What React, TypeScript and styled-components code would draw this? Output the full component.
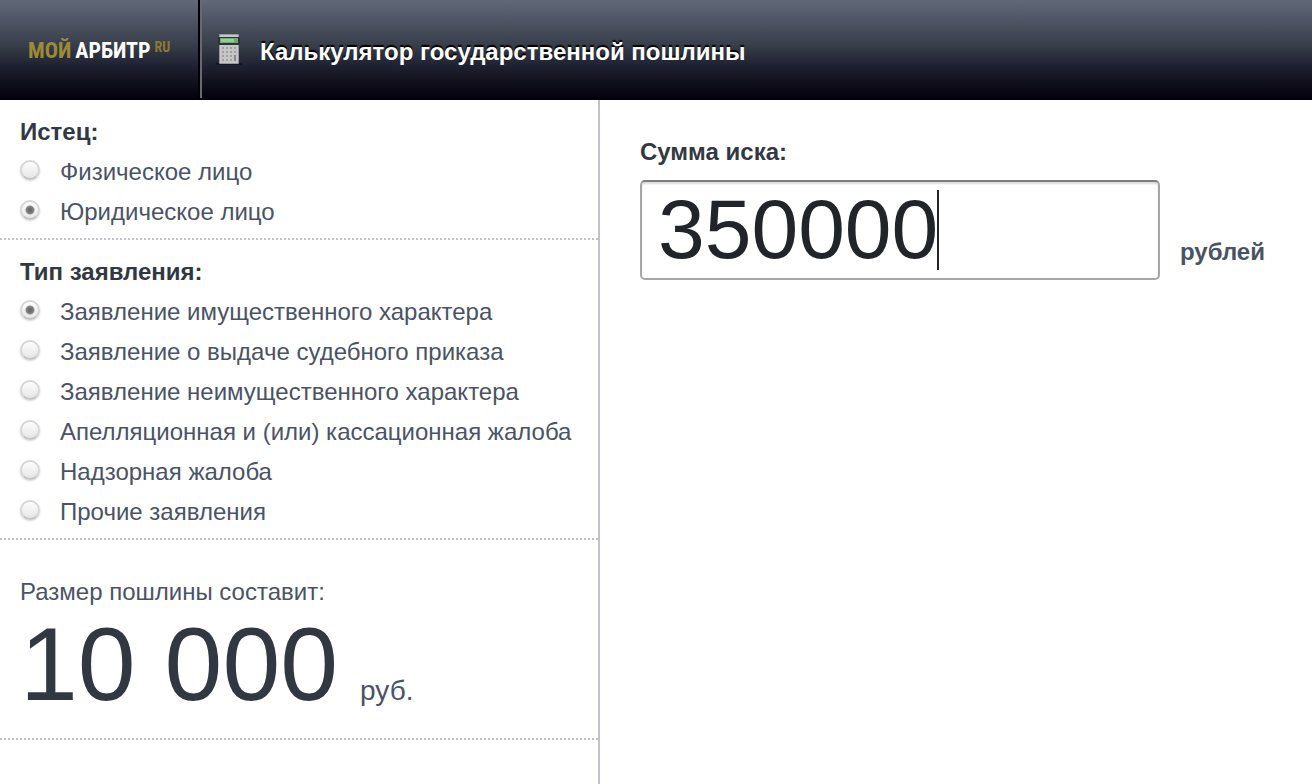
import React, { useState } from "react";
import styled, { createGlobalStyle } from "styled-components";

const GlobalStyle = createGlobalStyle`
  *, *::before, *::after { box-sizing: border-box; }
  body {
    margin: 0;
    background: #fff;
    color: #4a5365;
    font-family: "Liberation Sans", Arial, sans-serif;
    font-size: 24px;
    line-height: 40px;
  }
`;

const Page = styled.div`
  min-height: 100vh;
  display: flex;
  flex-direction: column;
`;

const Header = styled.header`
  display: flex;
  height: 100px;
  background: linear-gradient(#616879 0%, #383e4a 45%, #1f2130 66%, #0a0814 90%, #02000c 100%);
`;

const Logo = styled.a`
  flex: none;
  display: flex;
  align-items: flex-start;
  width: 200px;
  padding: 38px 0 0 28px;
  font-family: "Roboto Condensed", "Open Sans Condensed", Roboto, "Liberation Sans", sans-serif;
  font-size: 22px;
  font-weight: bold;
  line-height: 26px;
  text-decoration: none;
`;

const LogoPart = styled.span<{ $tone: "gold" | "white" }>`
  color: ${(p) => (p.$tone === "gold" ? "#9c8b35" : "#fff")};
  margin-right: 4px;
`;

const LogoZone = styled.sup`
  color: #8b7a33;
  font-size: 14px;
  line-height: 18px;
  vertical-align: top;
`;

const Heading = styled.div`
  flex: 1;
  display: flex;
  align-items: center;
  gap: 16px;
  margin-bottom: 2px;
  padding-left: 14px;
  border-left: 2px solid #686a73;
  box-shadow: -2px 0 #000;
`;

const Title = styled.h1`
  margin: 6px 0 0;
  color: #fff;
  font-size: 24px;
  line-height: 40px;
  text-shadow: 0 -2px 1px #000;
`;

const Body = styled.div`
  flex: 1;
  display: flex;
`;

const Sidebar = styled.aside`
  flex: 0 0 600px;
  border-right: 2px solid #c1c1c9;
`;

const dots = "repeating-linear-gradient(90deg, #c1c1c9 0 2px, transparent 2px 4px)";

const Group = styled.fieldset`
  margin: 0;
  border: 0;
  padding: 12px 20px 8px;
  min-width: 0;
  background: ${dots} bottom / 100% 2px no-repeat;
`;

const GroupTitle = styled.legend`
  float: left;
  width: 100%;
  padding: 0;
  color: #323842;
  font-weight: bold;
`;

const Option = styled.label`
  clear: both;
  display: flex;
  align-items: flex-start;
  gap: 20px;
  white-space: nowrap;
`;

const Radio = styled.input`
  appearance: none;
  flex: none;
  width: 20px;
  height: 20px;
  margin: 8px 0 0;
  border: 2px solid #d6d6d6;
  border-bottom-color: #c2c2c2;
  border-radius: 50%;
  background: linear-gradient(#fdfdfd, #e6e6e6);
  box-shadow: 0 1px 2px #d0d0d0;
  &:checked {
    background: radial-gradient(circle, #6c6c6c 0 2px, #8d8d8d 4px, transparent 5px),
      linear-gradient(#fdfdfd, #e8e8e8);
  }
`;

const Result = styled.section`
  padding: 32px 20px 24px;
  background: ${dots} bottom / 100% 2px no-repeat;
`;

const Total = styled.output`
  display: flex;
  align-items: baseline;
  gap: 22px;
  height: 104px;
  font-size: 28px;
  line-height: 104px;
  white-space: nowrap;
`;

const Amount = styled.span`
  color: #323842;
  font-size: 104px;
`;

const Main = styled.main`
  flex: 1;
  min-width: 0;
  padding: 32px 40px;
`;

const SumLabel = styled.label`
  display: block;
  margin-bottom: 8px;
  color: #323842;
  font-weight: bold;
`;

const SumRow = styled.div`
  display: flex;
  align-items: flex-end;
  gap: 20px;
  font-weight: bold;
`;

const FieldBox = styled.div`
  position: relative;
  flex: 0 1 520px;
  min-width: 0;
`;

const SumInput = styled.input`
  display: block;
  width: 100%;
  height: 100px;
  margin: 0;
  padding: 0 16px 2px;
  border: 2px solid #a6a6a6;
  border-top-color: #7e7e7e;
  border-radius: 5px;
  outline: 0;
  background: #fff;
  box-shadow: inset 0 2px 2px #ddd;
  color: #212428;
  font: 84px "Liberation Sans", Arial, sans-serif;
`;

const Caret = styled.span`
  position: absolute;
  top: 10px;
  left: 297px;
  width: 2px;
  height: 80px;
  background: #212428;
`;

const Unit = styled.span`
  padding-bottom: 8px;
`;

const CalculatorIcon = () => (
  <svg width="28" height="34" viewBox="0 0 28 34" aria-hidden="true">
    <path d="M0 31h26v2H0z" fill="#080810" opacity=".5" />
    <rect x="3" y="2" width="20" height="30" rx="1" fill="#999" />
    <rect x="4" y="3" width="18" height="28" fill="#c6c6c6" />
    <rect x="2" y="5" width="22" height="8" rx="1" fill="#2c3634" />
    <rect x="4" y="6" width="18" height="5" fill="#6fa876" />
    <rect x="5" y="7" width="13" height="3" fill="#8fce94" />
    <g fill="#a0a0a0">
      {[15, 19, 23, 27].map((y) =>
        [6, 10, 14, 18].map((x) => <rect key={`${x}-${y}`} x={x} y={y} width="2" height="2" />)
      )}
      <rect x="18" y="23" width="2" height="6" fill="#888" />
    </g>
  </svg>
);

const plaintiffs = ["Физическое лицо", "Юридическое лицо"];
const claims = [
  "Заявление имущественного характера",
  "Заявление о выдаче судебного приказа",
  "Заявление неимущественного характера",
  "Апелляционная и (или) кассационная жалоба",
  "Надзорная жалоба",
  "Прочие заявления",
];

type RadioGroupProps = { title: string; name: string; options: string[]; initial: number };

function RadioGroup({ title, name, options, initial }: RadioGroupProps) {
  const [selected, setSelected] = useState(initial);
  return (
    <Group>
      <GroupTitle>{title}</GroupTitle>
      {options.map((text, i) => (
        <Option key={text}>
          <Radio type="radio" name={name} checked={selected === i} onChange={() => setSelected(i)} />
          {text}
        </Option>
      ))}
    </Group>
  );
}

export default function App() {
  const [sum, setSum] = useState("350000");
  return (
    <Page>
      <GlobalStyle />
      <Header>
        <Logo href="#">
          <LogoPart $tone="gold">МОЙ</LogoPart>
          <LogoPart $tone="white">АРБИТР</LogoPart>
          <LogoZone>RU</LogoZone>
        </Logo>
        <Heading>
          <CalculatorIcon />
          <Title>Калькулятор государственной пошлины</Title>
        </Heading>
      </Header>
      <Body>
        <Sidebar>
          <RadioGroup title="Истец:" name="plaintiff" options={plaintiffs} initial={1} />
          <RadioGroup title="Тип заявления:" name="claim" options={claims} initial={0} />
          <Result>
            <div>Размер пошлины составит:</div>
            <Total>
              <Amount>10 000</Amount>
              руб.
            </Total>
          </Result>
        </Sidebar>
        <Main>
          <SumLabel htmlFor="sum">Сумма иска:</SumLabel>
          <SumRow>
            <FieldBox>
              <SumInput id="sum" type="text" value={sum} onChange={(e) => setSum(e.target.value)} />
              <Caret />
            </FieldBox>
            <Unit>рублей</Unit>
          </SumRow>
        </Main>
      </Body>
    </Page>
  );
}
